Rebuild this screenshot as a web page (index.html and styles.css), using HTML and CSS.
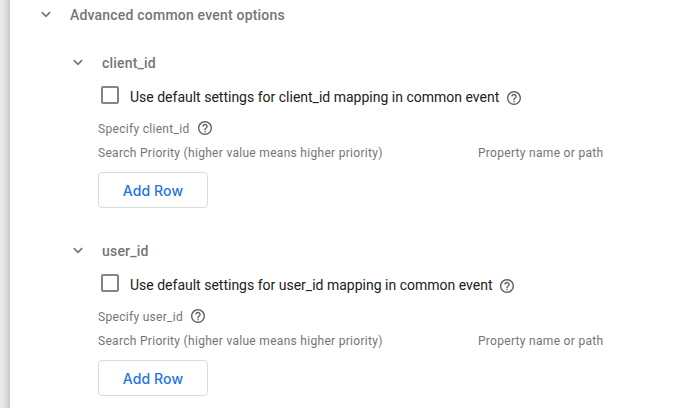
FILE: index.html
```html
<!DOCTYPE html>
<html lang="en">
<head>
<meta charset="utf-8">
<title>Advanced common event options</title>
<link rel="stylesheet" href="styles.css">
</head>
<body>
<svg class="defs" width="0" height="0">
  <symbol id="chevron" viewBox="0 0 12 8"><path d="M1 1.200 6 6.200l5-5" fill="none" stroke="currentColor" stroke-width="2"/></symbol>
  <symbol id="help" viewBox="2 2 20 20"><path fill="currentColor" d="M11 18h2v-2h-2v2zm1-16C6.480 2 2 6.480 2 12s4.480 10 10 10 10-4.480 10-10S17.520 2 12 2zm0 18c-4.410 0-8-3.590-8-8s3.590-8 8-8 8 3.590 8 8-3.590 8-8 8zm0-14c-2.210 0-4 1.790-4 4h2c0-1.100.9-2 2-2s2 .9 2 2c0 2-3 1.750-3 5h2c0-2.250 3-2.500 3-5 0-2.210-1.790-4-4-4z"/></symbol>
</svg>
<div class="gutter"></div>
<main class="panel">
  <h2 class="title"><svg class="chevron"><use href="#chevron"/></svg><span>Advanced common event options</span></h2>
  <section class="group">
    <h3 class="subtitle"><svg class="chevron"><use href="#chevron"/></svg><span>client_id</span></h3>
    <div class="option"><span class="checkbox" role="checkbox" aria-checked="false"></span><span class="option-text">Use default settings for client_id mapping in common event</span><svg class="help"><use href="#help"/></svg></div>
    <div class="specify"><span>Specify client_id</span><svg class="help"><use href="#help"/></svg></div>
    <div class="columns"><span>Search Priority (higher value means higher priority)</span><span>Property name or path</span></div>
    <button class="add">Add Row</button>
  </section>
  <section class="group">
    <h3 class="subtitle"><svg class="chevron"><use href="#chevron"/></svg><span>user_id</span></h3>
    <div class="option"><span class="checkbox" role="checkbox" aria-checked="false"></span><span class="option-text">Use default settings for user_id mapping in common event</span><svg class="help"><use href="#help"/></svg></div>
    <div class="specify"><span>Specify user_id</span><svg class="help"><use href="#help"/></svg></div>
    <div class="columns"><span>Search Priority (higher value means higher priority)</span><span>Property name or path</span></div>
    <button class="add">Add Row</button>
  </section>
</main>
</body>
</html>
```
FILE: styles.css
```css
* { box-sizing: border-box; }
body {
  margin: 0;
  display: flex;
  height: 408px;
  overflow: hidden;
  background: #fff;
  font-family: Roboto, sans-serif;
  color: #202124;
}
.defs { display: none; }
.gutter {
  width: 10px;
  flex: none;
  background: linear-gradient(to right, #e9eaec 0, #e3e4e6 40%, #d3d4d6 75%, #c5c6c8 100%);
}
.panel { flex: 1; padding-left: 31px; }
.title, .subtitle {
  margin: 0;
  display: flex;
  align-items: center;
  font-size: 14px;
  font-weight: 500;
  letter-spacing: 0.2px;
  color: #757575;
}
.title { height: 30px; margin-bottom: 17px; }
.chevron { width: 10px; height: 7px; margin-right: 19px; margin-top: -2px; }
.group { padding-left: 57px; height: 188px; }
.subtitle { height: 32px; margin-left: -25px; }
.option { display: flex; align-items: center; height: 34px; padding-left: 3px; font-size: 14px; }
.option-text { margin-top: 2px; }
.checkbox { width: 18px; height: 18px; border: 2px solid #80868b; border-radius: 2px; margin: -2px 11px 0 0; }
.help { width: 14px; height: 14px; color: #5f6368; margin: 4px 0 0 8px; }
.specify { display: flex; align-items: center; height: 30px; padding-top: 1px; font-size: 12px; letter-spacing: 0.3px; color: #757575; }
.specify span { margin-top: 1px; }
.specify .help { margin-top: -1px; }
.columns { display: grid; grid-template-columns: 380px 1fr; height: 29px; line-height: 20px; font-size: 12px; letter-spacing: 0.3px; color: #757575; }
.add {
  display: block;
  width: 110px;
  height: 36px;
  padding: 2px 0 0;
  border: 1px solid #dadce0;
  border-radius: 4px;
  background: #fff;
  color: #1a73e8;
  font: 500 14px/32px Inter, sans-serif;
  letter-spacing: 0.1px;
}
```
